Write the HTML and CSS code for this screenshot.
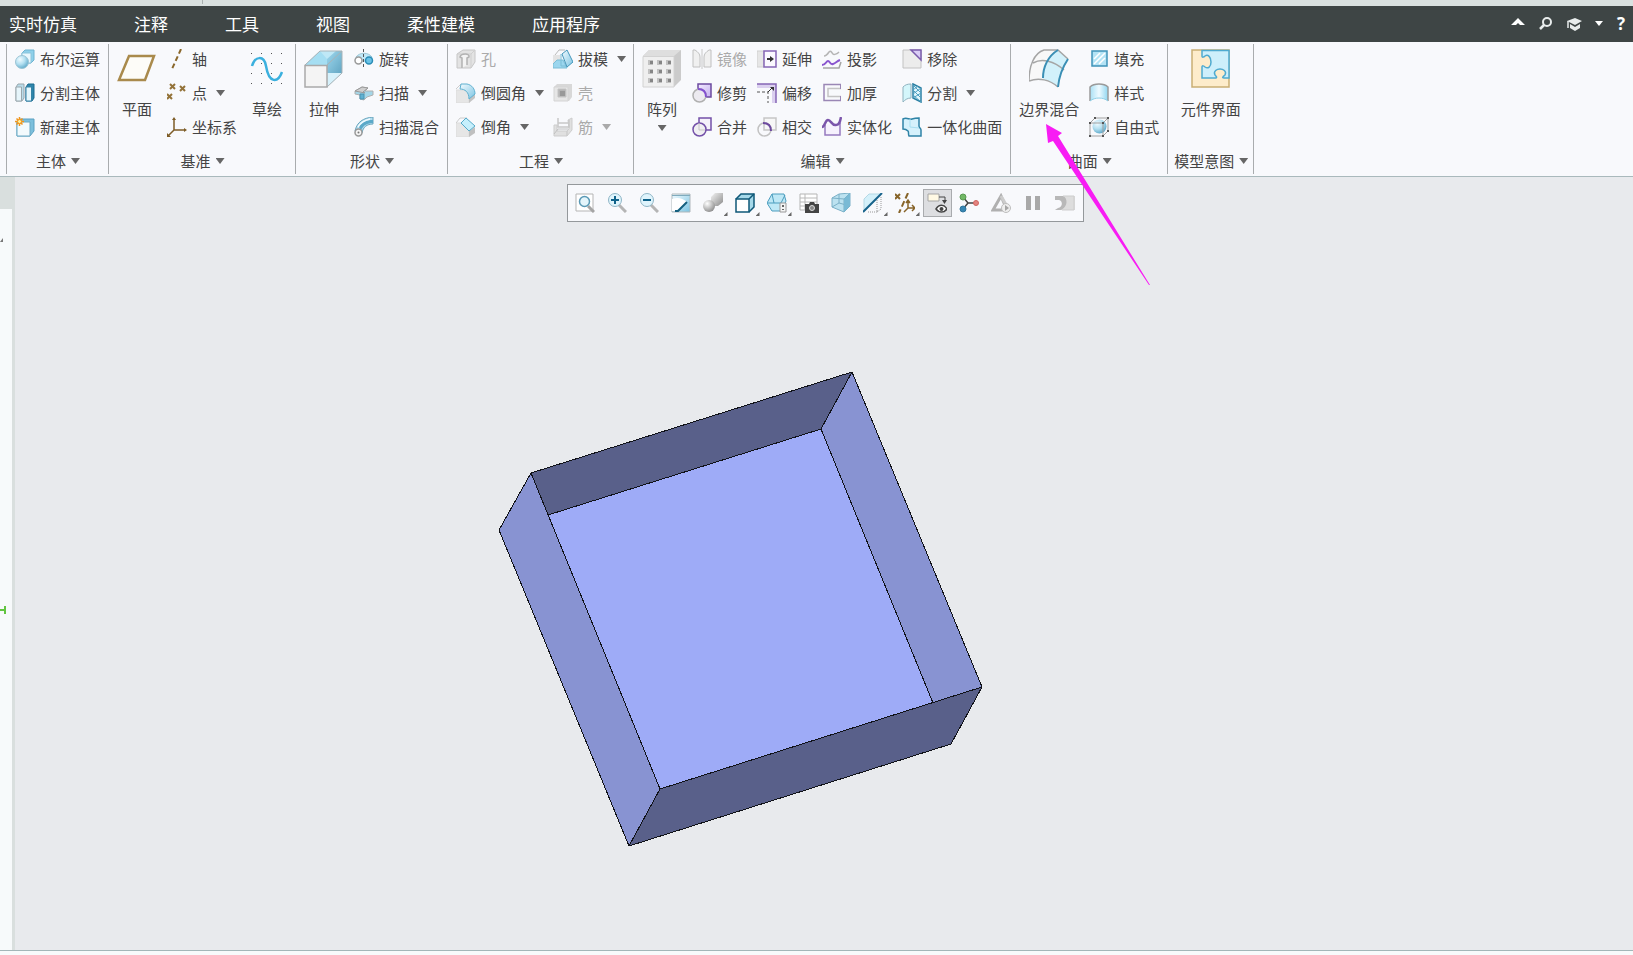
FILE: index.html
```
<!DOCTYPE html>
<html lang="zh-CN">
<head>
<meta charset="utf-8">
<title>零件建模</title>
<link rel="stylesheet" href="styles.css">
</head>
<body>
<svg class="defs" aria-hidden="true">
  <defs>
    <linearGradient id="blue" x1="0" y1="0" x2="1" y2="1"><stop offset="0" stop-color="#f2fbff"/><stop offset="1" stop-color="#7cc4e2"/></linearGradient>
    <linearGradient id="blueH" x1="0" y1="0" x2="1" y2="0"><stop offset="0" stop-color="#a9e0f5"/><stop offset=".5" stop-color="#eefaff"/><stop offset="1" stop-color="#8fd6f1"/></linearGradient>
    <linearGradient id="deep" x1="0" y1="0" x2="1" y2="1"><stop offset="0" stop-color="#9fd8ee"/><stop offset="1" stop-color="#62a6c3"/></linearGradient>
    <linearGradient id="grey" x1="0" y1="0" x2="1" y2="1"><stop offset="0" stop-color="#f4f4f4"/><stop offset="1" stop-color="#8a8a8a"/></linearGradient>
    <linearGradient id="lilac" x1="0" y1="0" x2="1" y2="1"><stop offset="0" stop-color="#f3ecff"/><stop offset="1" stop-color="#c4aef0"/></linearGradient>
    <radialGradient id="ball" cx=".35" cy=".3" r=".75"><stop offset="0" stop-color="#f0fbff"/><stop offset=".5" stop-color="#b4e0f1"/><stop offset="1" stop-color="#5ba7c8"/></radialGradient>
    <radialGradient id="steel" cx=".35" cy=".3" r=".75"><stop offset="0" stop-color="#fff"/><stop offset="1" stop-color="#8c8c8c"/></radialGradient>
  </defs>
</svg>

<div class="topstrip"></div>

<header class="menubar">
  <nav class="tabs">
    <button>实时仿真</button><button>注释</button><button>工具</button><button>视图</button><button>柔性建模</button><button>应用程序</button>
  </nav>
  <div class="tools">
    <button aria-label="最小化功能区"><svg width="16" height="16"><path d="M1 9 8 2l7 7h-5L8 7 6 9z" fill="#fff"/></svg></button>
    <button aria-label="搜索"><svg width="16" height="16"><circle cx="9" cy="6" r="4" fill="none" stroke="#e8ecec" stroke-width="2"/><path d="M6 9l-4 4" stroke="#e8ecec" stroke-width="2.500"/></svg></button>
    <button aria-label="学习"><svg width="16" height="16"><path d="M1 5l8-3 7 3-7 4z" fill="#e8ecec"/><path d="M4 8l5 3 5-3v4l-5 3-5-3z" fill="#e8ecec"/><path d="M2 5v7" stroke="#e8ecec" stroke-width="1.500"/></svg></button>
    <button aria-label="更多"><svg width="10" height="16"><path d="M1 5h8L5 10z" fill="#fff"/></svg></button>
    <button class="help" aria-label="帮助">?</button>
  </div>
</header>

<section class="ribbon">
  <div class="group">
    <div class="body">
      <div class="col">
        <button class="cmd"><svg width="20" height="20"><path d="M7 4 10 1h9v10l-3 3H7z" fill="#8ed0ea" stroke="#6fb3d0"/><path d="M7 4h9v10H7z" fill="#e9f7fd" stroke="#8cc5dc"/><circle cx="7" cy="13" r="6.500" fill="url(#ball)" stroke="#9cc4d4"/></svg>布尔运算</button>
        <button class="cmd"><svg width="20" height="20"><path d="M1 4 3 1h6v14l-2 3H1z" fill="#b9dcea" stroke="#9aa7ad"/><path d="M1 4h5.500v14H1z" fill="#e6f5fb" stroke="#9aa7ad"/><path d="M11 4l2-3h6v14l-2 3h-6z" fill="#2e86ac" stroke="#1b6a8f"/><path d="M11 4h5.500v14H11z" fill="#e6f7fd" stroke="#3683a6"/></svg>分割主体</button>
        <button class="cmd"><svg width="20" height="20"><path d="M2 5 5 2h14v12l-4 5H2z" fill="#7cbfdc" stroke="#5aa1c2"/><path d="M2 5h13v14H2z" fill="#f3fafd" stroke="#6aa9c4"/><path d="M4.500 0v9M0 4.500h9M1.500 1.500l6 6M7.500 1.500l-6 6" stroke="#f0951c" stroke-width="1.500"/><circle cx="4.500" cy="4.500" r="2" fill="#fff3a0" stroke="#f0951c"/></svg>新建主体</button>
      </div>
    </div>
    <button class="title">主体<i class="caret"></i></button>
  </div>

  <div class="group">
    <div class="body">
      <button class="big"><svg width="40" height="40"><path d="M12 8h25L28 32H2z" fill="#fdfcf8" stroke="#a98a4c" stroke-width="2.500"/></svg>平面</button>
      <div class="col">
        <button class="cmd"><svg width="20" height="20"><path d="M14 0 5 20" stroke="#8a672b" stroke-width="2" stroke-dasharray="5 3"/></svg>轴</button>
        <button class="cmd"><svg width="20" height="20"><path d="M3 1l5 5M8 1 3 6M13 3l5 5M18 3l-5 5M0 11l5 5M5 11l-5 5" stroke="#937238" stroke-width="2"/></svg>点<i class="caret"></i></button>
        <button class="cmd"><svg width="20" height="20"><path d="M7 2v11h11M7 13l-6 6" fill="none" stroke="#7d5c26" stroke-width="1.500"/><path d="M5 3 7 0l2 3zM17 11l3 2-3 2zM0 16v4h4z" fill="#7d5c26"/></svg>坐标系</button>
      </div>
      <button class="big"><svg width="40" height="40"><g fill="#555"><path d="M4 5h1v1H4zM14 5h1v1h-1zM24 5h1v1h-1zM34 5h1v1h-1zM14 15h1v1h-1zM24 15h1v1h-1zM34 15h1v1h-1zM4 25h1v1H4zM14 25h1v1h-1zM24 25h1v1h-1zM34 25h1v1h-1zM4 35h1v1H4zM14 35h1v1h-1zM24 35h1v1h-1zM34 35h1v1h-1z"/></g><path d="M5 18C8 8 17 7 19 18c3 18 12 17 16 6" fill="none" stroke="#3bb0de" stroke-width="2.500"/></svg>草绘</button>
    </div>
    <button class="title">基准<i class="caret"></i></button>
  </div>

  <div class="group">
    <div class="body">
      <button class="big"><svg width="40" height="40"><path d="M1 17 16 3h22v22L23 39z" fill="#b5e4f5"/><path d="M16 3h8v14H1z" fill="#a5def2"/><path d="M23 3h15v22H23z" fill="url(#deep)"/><path d="M38 25 23 39V25z" fill="#d6f1fb"/><path d="M16 3h16L23 11z" fill="#bfe8f6"/><path d="M1 17 16 3h22v22L23 39M23 17 38 3" fill="none" stroke="#a9b3b7"/><path d="M1 17.500h22V39H1z" fill="#f4f4f4" stroke="#a9a9a9" stroke-width="1.500"/></svg>拉伸</button>
      <div class="col">
        <button class="cmd"><svg width="20" height="20"><path d="M1 9c3-6 15-6 18 0v4H1z" fill="#bfe8f8"/><path d="M2 8c4-5 12-5 16 0" fill="none" stroke="#9ac5d5"/><circle cx="4.500" cy="11.500" r="3.500" fill="#fff" stroke="#9a9a9a" stroke-width="1.500"/><circle cx="15" cy="11.500" r="3.500" fill="#69c2e6" stroke="#2c8db6" stroke-width="1.500"/><path d="M9.500 0v20" stroke="#555" stroke-dasharray="3 2"/></svg>旋转</button>
        <button class="cmd"><svg width="20" height="20"><path d="M1 8 8 4l6 1-3 3h8v4l-6 2-3 3-4-1v-4l-5-1z" fill="#a4d6e8" stroke="#b0b0b0"/><path d="M1 8 8 4l6 1-5 4 2 1z" fill="#cfcfcf" stroke="#9a9a9a"/><path d="M6 11h4v5H6z" fill="#5fb1d2" stroke="#4c93b0"/></svg>扫描<i class="caret"></i></button>
        <button class="cmd"><svg width="20" height="20"><path d="M1 14C3 5 9 1 19 0v7C13 7 9 10 8 16z" fill="#b3def0" stroke="#69a5bd"/><path d="M5 10C8 5 12 3 19 3v3C13 6 10 8 7 13z" fill="#5ba9c9"/><path d="M4 10c3-5 7-7 12-8" fill="none" stroke="#f2fbff" stroke-width="1.500"/><circle cx="4.500" cy="15.500" r="3.500" fill="#f4f4f4" stroke="#999" stroke-width="1.500"/><circle cx="4.500" cy="15.500" r="1" fill="#777"/></svg>扫描混合</button>
      </div>
    </div>
    <button class="title">形状<i class="caret"></i></button>
  </div>

  <div class="group">
    <div class="body">
      <div class="col">
        <button class="cmd" disabled><svg width="20" height="20"><path d="M1 5 7 1h12v12l-4 6H1z" fill="#e3e3e3" stroke="#c6c6c6"/><path d="M1 5h14v14M15 5l4-4" fill="none" stroke="#cfcfcf"/><path d="M6 19V9l-2-1c1-4 10-4 9 0l-2 1v7" fill="#f4f4f4" stroke="#b3b3b3" stroke-width="1.500"/></svg>孔</button>
        <button class="cmd"><svg width="20" height="20"><path d="M0 7h6c5 0 7 4 7 8v5H0z" fill="#e6e6e6" stroke="#dcdcdc"/><path d="M13 15l6-4v4l-6 5z" fill="#c4c4c4"/><path d="M0 6l5-5" stroke="#ccc"/><path d="M5 1h6c5 1 8 5 8 10l-6 5C13 9 9 6 4 6z" fill="url(#blue)" stroke="#5fb0d0"/></svg>倒圆角<i class="caret"></i></button>
        <button class="cmd"><svg width="20" height="20"><path d="M0 6h5l8 8v6H0z" fill="#e6e6e6" stroke="#dcdcdc"/><path d="M13 14l6-4v6l-6 4z" fill="#c0c0c0"/><path d="M0 6l4-5h7" fill="none" stroke="#ccc"/><path d="M10 1l9 8-6 5-8-8z" fill="#c6effc" stroke="#55aaca"/></svg>倒角<i class="caret"></i></button>
      </div>
      <div class="col">
        <button class="cmd"><svg width="20" height="20"><path d="M0 6h7v10H0z" fill="#e4e4e4"/><path d="M2 6 6 1h6" fill="none" stroke="#bbb"/><path d="M0 15l4-4h6l4 8H0z" fill="#9bd6ee" stroke="#7bbdd6"/><path d="M8 5v12h5" fill="none" stroke="#7bbdd6"/><path d="M9 5l5-4 6 12-6 5z" fill="url(#blue)" stroke="#4597bb"/></svg>拔模<i class="caret"></i></button>
        <button class="cmd" disabled><svg width="20" height="20"><path d="M1 4 4 1h15v13l-3 4H1z" fill="#d8d8d8"/><path d="M1 4h14v14H1z" fill="#e6e6e6" stroke="#d4d4d4"/><path d="M5 6h8v8H5z" fill="#b5b5b5" stroke="#c4c4c4"/><path d="M7 8h5v5H7z" fill="#999"/></svg>壳</button>
        <button class="cmd" disabled><svg width="20" height="20"><path d="M1 8h3v6h10v5H1zM15 3l4-2v12l-5 6v-5l2-2z" fill="#e0e0e0" stroke="#cdcdcd"/><path d="M5 1v9h11V3M5 6h11" fill="none" stroke="#c8c8c8" stroke-width="1.500"/><path d="M1 17l4-5h10" fill="none" stroke="#c0c0c0"/></svg>筋<i class="caret"></i></button>
      </div>
    </div>
    <button class="title">工程<i class="caret"></i></button>
  </div>

  <div class="group">
    <div class="body">
      <button class="big"><svg width="40" height="40"><path d="M1 8 7 2h32v30l-7 7z" fill="#cbcbcb"/><path d="M1 8 7 2h32l-7 6z" fill="#dedede"/><path d="M1 8.500h31V39H1z" fill="#efefef" stroke="#d2d2d2"/><g fill="#c2c2c2"><path d="M6 12h5v5H6zM15 12h5v5h-5zM24 12h5v5h-5zM6 21h5v5H6zM15 21h5v5h-5zM24 21h5v5h-5zM6 30h5v5H6zM15 30h5v5h-5zM24 30h5v5h-5z"/></g><g fill="#858585"><path d="M8 13h3v3H8zM17 13h3v3h-3zM26 13h3v3h-3zM8 22h3v3H8zM17 22h3v3h-3zM26 22h3v3h-3zM8 31h3v3H8zM17 31h3v3h-3zM26 31h3v3h-3z"/></g></svg>阵列<i class="caret"></i></button>
      <div class="col">
        <button class="cmd" disabled><svg width="20" height="20"><path d="M1 1h2c3 2 5 4 5 7v10H1zM19 1h-2c-3 2-5 4-5 7v10h7z" fill="#f0f0f0" stroke="#c0c0c0"/><path d="M10 0v20" stroke="#c8c8c8"/></svg>镜像</button>
        <button class="cmd"><svg width="20" height="20"><path d="M6 1h13v13H6z" fill="url(#lilac)" stroke="#6b4a9f" stroke-width="1.500"/><circle cx="7.500" cy="12.500" r="6.500" fill="#eceaf0" stroke="#b0b0b0" stroke-width="1.500"/><path d="M6 6c5 0 8 3 8 8" fill="none" stroke="#8350d0" stroke-width="2"/></svg>修剪</button>
        <button class="cmd"><svg width="20" height="20"><path d="M7 1h12v12H7z" fill="#f5f2fa" stroke="#7350a8" stroke-width="1.500"/><circle cx="7.500" cy="12.500" r="6.500" fill="#f0eff2" stroke="#7350a8" stroke-width="1.500"/><path d="M7 6v7h6" fill="none" stroke="#c6c6c6"/></svg>合并</button>
      </div>
      <div class="col">
        <button class="cmd"><svg width="20" height="20"><path d="M0 2h7v16H0z" fill="#e6e6e6" stroke="#d0d0d0"/><path d="M7 2h12v16H7z" fill="#fbf9ff" stroke="#8565b5" stroke-width="1.500"/><path d="M10 10h5" stroke="#333" stroke-width="2"/><path d="M13 7l4 3-4 3z" fill="#333"/></svg>延伸</button>
        <button class="cmd"><svg width="20" height="20"><path d="M0 1h19v19h-4V5H0z" fill="#dbd0ef"/><path d="M0 1h19v19" fill="none" stroke="#8565b5" stroke-width="1.500"/><path d="M0 9h11v11" fill="none" stroke="#555" stroke-dasharray="3 2"/><path d="M11 9l4-4" stroke="#333"/><path d="M13 4h4v4z" fill="#333"/></svg>偏移</button>
        <button class="cmd"><svg width="20" height="20"><path d="M7 1h12v12H7z" fill="#f7f7f7" stroke="#c6c6c6" stroke-width="1.500"/><circle cx="7.500" cy="12.500" r="6.500" fill="none" stroke="#c2c2c2" stroke-width="1.500"/><path d="M6 6c5 0 8 3 8 8" fill="none" stroke="#6d4a9f" stroke-width="2"/></svg>相交</button>
      </div>
      <div class="col">
        <button class="cmd"><svg width="20" height="20"><path d="M2 7c2 0 3-1 5-4 2-2 3 1 4 2s4 0 6-2" fill="none" stroke="#b5b5b5" stroke-width="1.500"/><path d="M1 19h16l2-6" fill="none" stroke="#a5a5a5" stroke-width="1.500"/><path d="M0 16c4 0 4-4 6-4s2 4 5 3 4-3 7-4" fill="none" stroke="#8a56cf" stroke-width="2"/></svg>投影</button>
        <button class="cmd"><svg width="20" height="20"><path d="M19 1.500H2v16h17" fill="none" stroke="#9a87b5" stroke-width="1.500"/><path d="M19 5.500H6v8h13" fill="none" stroke="#c4c4c4" stroke-width="1.500"/><path d="M18.500 1v5M18.500 13v5" stroke="#9a87b5"/></svg>加厚</button>
        <button class="cmd"><svg width="20" height="20"><path d="M3 8v10h15V6" fill="#f6f1fd" stroke="#9579bf" stroke-width="1.500"/><path d="M0 10c3 0 3-7 6-7s4 6 8 5c4 0 4-4 5-8" fill="none" stroke="#7b55ab" stroke-width="2.500"/></svg>实体化</button>
      </div>
      <div class="col">
        <button class="cmd"><svg width="20" height="20"><path d="M1 1h18v18H1z" fill="#ececec" stroke="#c2c2c2"/><path d="M9 1h10v10z" fill="#d9ccf5" stroke="#7a5bac" stroke-width="1.500"/></svg>移除</button>
        <button class="cmd"><svg width="20" height="20"><path d="M1 4c2-2 4-3 8-3v14c-4 0-6 2-8 4z" fill="#d4f6fb" stroke="#8fb2bf"/><path d="M11 1l8 4v14l-8-4z" fill="#e3f6fc" stroke="#2b7fa2" stroke-width="1.500"/><path d="M11 7l8 8M11 2l8 8M11 12l8 7M19 5l-8 6M19 10l-8 5M16 3l-5 4" stroke="#4c9fc1"/></svg>分割<i class="caret"></i></button>
        <button class="cmd"><svg width="20" height="20"><path d="M1 2c4-2 6 1 9 0s5-1 7-1v8c0 2 2 2 2 4v6H7c-1-2 0-4-1-5s-3-2-5-2z" fill="#d5f1fc" stroke="#2f83a6" stroke-width="1.500"/><path d="M8 2v8l9 1" fill="none" stroke="#a8dff1"/></svg>一体化曲面</button>
      </div>
    </div>
    <button class="title">编辑<i class="caret"></i></button>
  </div>

  <div class="group">
    <div class="body">
      <button class="big"><svg width="40" height="40"><path d="M0 32C0 18 5 5 15 2h14l10 9c-5 9-9 18-10 28C21 32 10 29 0 33z" fill="#f8f8f8"/><path d="M29 2l10 9c-5 9-9 18-10 28-5-4-10-7-15-8 0-12 5-23 15-29z" fill="#d2f1fb"/><path d="M0 33C0 18 5 5 15 2h14l10 9M0 33c10-4 21-1 29 6M4 15c9-5 21-2 31 7" fill="none" stroke="#a5a5a5" stroke-width="1.500"/><path d="M29 2C19 8 14 19 14 30M39 11c-6 9-9 18-10 28" fill="none" stroke="#3a8fb5" stroke-width="2"/></svg>边界混合</button>
      <div class="col">
        <button class="cmd"><svg width="20" height="20"><path d="M3 2h15v15H3z" fill="#b4e3f5" stroke="#3f93b8" stroke-width="1.500"/><path d="M5 10l6-6M5 15 16 4M10 15l6-6" stroke="#fff" stroke-width="1.500"/></svg>填充</button>
        <button class="cmd"><svg width="20" height="20"><path d="M1 4c4-4 14-4 18 0v14c-5-4-13-4-18 0z" fill="url(#blueH)"/><path d="M1 18V4c4-4 14-4 18 0v14" fill="none" stroke="#9a9a9a" stroke-width="1.500"/><path d="M1 18c5-4 13-4 18 0" fill="none" stroke="#8fd0e8"/></svg>样式</button>
        <button class="cmd"><svg width="20" height="20"><circle cx="10.500" cy="9.500" r="7" fill="url(#ball)"/><path d="M1 6h13v13H1zM1 6l5-5h13v13l-5 5M14 6l5-5" fill="none" stroke="#a0a0a0"/><path d="M0 5h2v2H0zM13 5h2v2h-2zM0 18h2v2H0zM13 18h2v2h-2zM5 0h2v2H5zM18 0h2v2h-2zM18 13h2v2h-2z" fill="#555"/></svg>自由式</button>
      </div>
    </div>
    <button class="title">曲面<i class="caret"></i></button>
  </div>

  <div class="group last">
    <div class="body">
      <button class="big"><svg width="40" height="40"><path d="M1 2h37v37H1z" fill="#fdeccb" stroke="#c9ae74" stroke-width="1.500"/><path d="M11 2.500h27V30H33c-3 0 0-2 1-3 2-4-2-6-5-6s-7 2-5 6c1 1 3 3 0 3H11V19c0-2 2-1 3 0 3 2 6 0 6-5s-3-8-6-6c-1 1-3 2-3 0z" fill="#cdeffb" stroke="#4eaad0" stroke-width="1.500"/></svg>元件界面</button>
    </div>
    <button class="title">模型意图<i class="caret"></i></button>
  </div>
</section>

<main class="work">
  <aside class="tree">
    <div class="treebody">
      <svg class="corner" width="3" height="4"><path d="M3 0v4H0z" fill="#777"/></svg>
      <svg class="mark" width="6" height="10"><path d="M0 5h5M5 1v8" stroke="#62c541" stroke-width="2"/></svg>
    </div>
  </aside>
  <div class="canvas">
    <div class="viewbar" role="toolbar">
      <button aria-label="重新调整"><svg width="20" height="20"><path d="M1 1h17v17H1z" fill="#fff" stroke="#b5b5b5"/><path d="M13 13l6 6" stroke="#a5a5a5" stroke-width="3"/><circle cx="9.500" cy="8.500" r="5" fill="#e4f5fb" stroke="#5a99b5" stroke-width="1.500"/></svg></button>
      <button aria-label="放大"><svg width="20" height="20"><path d="M12 12l7 7" stroke="#b5b5b5" stroke-width="3"/><circle cx="8" cy="7" r="6.500" fill="#dff4fc" stroke="#8fb5c6"/><path d="M4 7h8M8 3v8" stroke="#0f628a" stroke-width="2"/></svg></button>
      <button aria-label="缩小"><svg width="20" height="20"><path d="M12 12l7 7" stroke="#b5b5b5" stroke-width="3"/><circle cx="8" cy="7" r="6.500" fill="#dff4fc" stroke="#8fb5c6"/><path d="M4 7h8" stroke="#0f628a" stroke-width="2"/></svg></button>
      <button aria-label="重画"><svg width="20" height="20"><path d="M1 1h18v18H1z" fill="url(#blue)" stroke="#b0b8bb"/><path d="M1 2h18v1H1z" fill="#7fabbd"/><path d="M1 6c6-2 10-1 15 3L5 18H1z" fill="#fff"/><path d="M16 9l-9 9H4" fill="none" stroke="#17607f" stroke-width="2"/></svg></button>
      <button aria-label="渲染选项" class="more"><svg width="20" height="20"><path d="M8 4l4-4h8v9l-5 4H8z" fill="url(#grey)"/><circle cx="6" cy="13" r="6" fill="url(#steel)"/></svg></button>
      <button aria-label="显示样式" class="more"><svg width="20" height="20"><path d="M1 6 6 1h13v13l-5 5" fill="#a6d9ea" stroke="#0f5878" stroke-width="1.500"/><path d="M1 6h13v13H1zM14 6l5-5" fill="#fff" stroke="#0f5878" stroke-width="1.500"/></svg></button>
      <button aria-label="已保存方向" class="more"><svg width="20" height="20"><path d="M0 10 5 1h12l2 7-4 10H5z" fill="#bfe8f6" stroke="#4c9dbe"/><path d="M0 10h14l4-8M14 10l1 8M5 1l2 9" fill="none" stroke="#4c9dbe"/><path d="M13 10h6v9h-6z" fill="#f5f5f5" stroke="#999"/><path d="M15 12h2v2h-2zM15 16h2v1h-2z" fill="#666"/></svg></button>
      <button aria-label="视图管理器"><svg width="20" height="20"><path d="M1 1h17v16H1z" fill="#fff" stroke="#b5b5b5"/><path d="M1 5h17M1 9h17M1 13h17M6 1v16" stroke="#b9b9b9"/><path d="M6 11h4l1-2h4l1 2h4v9H6z" fill="#444"/><circle cx="13" cy="15" r="2.500" fill="#888" stroke="#ddd"/></svg></button>
      <button aria-label="透视图"><svg width="20" height="20"><path d="M1 5 8 1l11-1v13l-6 6-12-5z" fill="#bce2f0" stroke="#7ab0c7"/><path d="M1 5l12 1v13M13 6l6-6M8 1v9l-7 4M8 10l11 3" fill="none" stroke="#7ab0c7"/><path d="M13 6l6-6v13l-6 6z" fill="#79bad5"/></svg></button>
      <button aria-label="显示截面" class="more"><svg width="20" height="20"><path d="M1 6 6 1h12L3 17H1z" fill="#d4f0fa" stroke="#b4d8e5"/><path d="M14 7v12H4M18 4v12l-4 3" fill="none" stroke="#999" stroke-dasharray="1 1"/><path d="M19 0 0 19" stroke="#17638b" stroke-width="2"/></svg></button>
      <button aria-label="基准显示过滤器" class="more"><svg width="20" height="20"><path d="M0 1l5 5M5 1 0 6" stroke="#876429" stroke-width="2"/><path d="M13 0 4 20" fill="none" stroke="#876429" stroke-width="2" stroke-dasharray="6 3"/><path d="M13 8v7h6M13 15l-4 4M11 10l2-3 2 3M17 12l3 3-3 3" fill="none" stroke="#876429" stroke-width="1.500"/></svg></button>
      <button aria-label="注释显示" class="pressed"><svg width="20" height="20"><path d="M1 1h11v7H1z" fill="#fff9e4" stroke="#a5a5a5"/><path d="M12 4h6v5" fill="none" stroke="#444"/><path d="M15 7h5l-2.500 4z" fill="#444"/><path d="M9 16c3-5 8-5 11 0-3 4-8 4-11 0z" fill="#fff" stroke="#444" stroke-width="1.500"/><circle cx="14.500" cy="16" r="2" fill="#444"/></svg></button>
      <button aria-label="旋转中心"><svg width="20" height="20"><path d="M4 4l5 6h7M9 10l-5 6" fill="none" stroke="#444" stroke-width="1.500"/><circle cx="4" cy="4" r="3" fill="#72b866" stroke="#5a9a51"/><circle cx="17" cy="10" r="2.500" fill="#e48480" stroke="#cf6560"/><circle cx="4" cy="16" r="3" fill="#3786b3" stroke="#2f759c"/></svg></button>
      <button aria-label="分析警告" disabled><svg width="20" height="20"><path d="M10 3 2 17h14z" fill="none" stroke="#b0b0b0" stroke-width="3"/><path d="M10 3l7 12" stroke="#ccc" stroke-width="3"/><circle cx="15" cy="15" r="4.500" fill="#eee" stroke="#bdbdbd"/><path d="M14 12l4 3-4 3z" fill="#a5a5a5"/></svg></button>
      <button aria-label="暂停仿真" disabled><svg width="20" height="20"><path d="M3 3h5v14H3zM12 3h5v14h-5z" fill="#a9a9a9"/></svg></button>
      <button aria-label="结果显示" disabled><svg width="20" height="20"><path d="M0 3h20v14H0l6-2c3-1 3-8-1-8H0z" fill="#ddd"/><path d="M0 3h8c5 2 5 11-2 14H0l3-2c5-1 5-7 1-8H0z" fill="#b8b8b8"/><path d="M8 3h11v14H7" fill="none" stroke="#cdcdcd"/></svg></button>
    </div>
    <svg class="model" width="500" height="490" viewBox="0 0 500 490" shape-rendering="crispEdges">
      <g stroke="#101218" stroke-width="1" stroke-linejoin="round">
        <path d="M58 150 331 64 443 338 170 424z" fill="#9eabf7"/>
        <path d="M41 108 362 7 331 64 58 150z" fill="#59608a"/>
        <path d="M362 7 492 322 443 338 331 64z" fill="#8893d2"/>
        <path d="M41 108 9 165 139 481 170 424z" fill="#8893d2"/>
        <path d="M170 424 492 322 461 379 139 481z" fill="#59608a"/>
      </g>
    </svg>
  </div>
</main>
<footer class="status"></footer>
<svg class="pointer" width="120" height="170" viewBox="0 0 120 170"><path d="M6 4 22 13 18 16 110 165 109 165 13 21 8 23z" fill="#f81cf4"/></svg>
</body>
</html>
```
FILE: styles.css
```
* { box-sizing: border-box; }

body {
  margin: 0;
  min-height: 100vh;
  display: flex;
  flex-direction: column;
  position: relative;
  overflow: hidden;
  background: #f7fafb;
  color: #444;
  font-family: "Noto Sans CJK SC", "Noto Sans", sans-serif;
  font-size: 15px;
}

button {
  margin: 0;
  padding: 0;
  border: 0;
  background: none;
  color: inherit;
  font: inherit;
  white-space: nowrap;
}

svg { display: block; flex: none; }

.defs { position: absolute; width: 0; height: 0; }

.topstrip {
  height: 6px;
  padding-left: 202px;
  background: #dae1e0;
}
.topstrip::before {
  content: "";
  display: block;
  width: 1px;
  height: 4px;
  background: #a9b0b0;
}

.menubar {
  display: flex;
  justify-content: space-between;
  align-items: center;
  height: 36px;
  padding: 0 7px 0 9px;
  background: #3e4545;
  color: #fff;
}
.tabs { display: flex; gap: 57px; font-size: 17px; line-height: 24px; }
.tools { display: flex; align-items: center; gap: 12px; }
.help { width: 10px; font: bold 17px/20px "Open Sans", sans-serif; }

.ribbon {
  display: flex;
  height: 135px;
  padding: 2px 0 2px 6px;
  background: #f8f9fc;
  border-bottom: 1px solid #a9b9bc;
}
.group {
  display: flex;
  flex-direction: column;
  align-items: center;
  padding: 0 8px;
  border-left: 1px solid #a9acae;
}
.group.last { padding: 0 6px; border-right: 1px solid #a9acae; }
.body { display: flex; gap: 10px; height: 98px; }
.col { display: flex; flex-direction: column; gap: 4px; }
.cmd {
  display: flex;
  align-items: center;
  gap: 5px;
  height: 30px;
  line-height: 20px;
}
.cmd .caret { margin-left: 4px; }
.cmd:disabled { color: #aaa; }
.big {
  display: flex;
  flex-direction: column;
  align-items: center;
  min-width: 40px;
  padding-top: 4px;
  line-height: 20px;
}
.big svg { margin-bottom: 11px; }
.big .caret { margin-top: 6px; }
.title {
  display: flex;
  align-items: center;
  gap: 5px;
  height: 24px;
  margin-top: 7px;
  line-height: 20px;
}
.caret {
  width: 9px;
  height: 6px;
  margin-right: -1px;
  background: #666;
  clip-path: polygon(0 0, 100% 0, 50% 100%);
}
.big .caret { margin-right: 0; }
:disabled .caret { background: #aaa; }

.work { display: flex; flex: 1; }
.tree {
  width: 15px;
  padding: 32px 3px 0 0;
  display: flex;
  background: #d9dfde;
}
.treebody { flex: 1; background: #f7fafb; }
.corner { margin-top: 29px; }
.mark { margin-top: 363px; }

.canvas {
  position: relative;
  flex: 1;
  padding: 7px 0 0 2px;
  background: #e8eaed;
}
.viewbar {
  display: flex;
  justify-content: center;
  gap: 3px;
  width: fit-content;
  margin: 0 auto;
  padding: 4px 3px;
  background: #f8f9fc;
  border: 1px solid #94989b;
}
.viewbar button {
  position: relative;
  display: grid;
  place-items: center;
  width: 29px;
  height: 28px;
}
.viewbar .pressed { background: #dddee1; border: 1px solid #a9abae; }
.more::after {
  content: "";
  position: absolute;
  right: 0;
  bottom: 1px;
  width: 4px;
  height: 4px;
  background: #666;
  clip-path: polygon(100% 0, 100% 100%, 0 100%);
}

.model { position: absolute; left: 475px; top: 188px; }
.pointer { position: absolute; left: 1040px; top: 120px; pointer-events: none; }

.status { height: 5px; border-top: 1px solid #a3b6b8; background: #f7fafb; }
```
